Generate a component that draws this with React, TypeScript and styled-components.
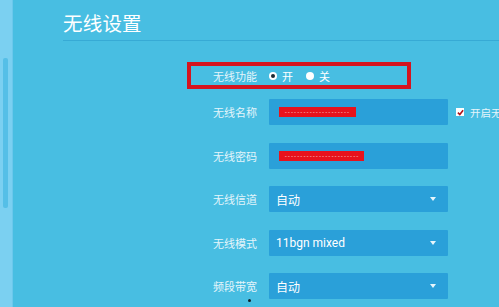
import React from 'react'
import styled, { createGlobalStyle } from 'styled-components'

const GlobalStyle = createGlobalStyle`
  html, body {
    margin: 0;
    padding: 0;
    background: #48bee2;
    overflow: hidden;
  }
  body {
    font-family: "Noto Sans CJK SC", "Noto Sans", sans-serif;
  }
`

const Page = styled.div`
  display: flex;
  width: 499px;
  height: 307px;
  background: #48bee2;
  position: relative;
  overflow: hidden;
`

const Sidebar = styled.div`
  width: 13px;
  flex: none;
  background: #7bd0f1;
  border-right: 1px solid #6cc8ec;
  box-sizing: border-box;
  padding-top: 58px;
  display: flex;
  justify-content: flex-start;
  padding-left: 3px;
`

const ScrollThumb = styled.div`
  width: 5px;
  height: 150px;
  border-radius: 2px;
  background: #55bfe7;
`

const Main = styled.div`
  flex: 1;
  padding-left: 50px;
  display: flex;
  flex-direction: column;
`

const Title = styled.h1`
  margin: 0;
  padding-top: 11px;
  height: 40px;
  box-sizing: border-box;
  font-size: 19.5px;
  font-weight: 400;
  color: #ffffff;
  line-height: 24px;
  letter-spacing: 0.2px;
`

const Divider = styled.div`
  height: 1px;
  background: #37aad5;
`

const Form = styled.div`
  display: flex;
  flex-direction: column;
  gap: 17.5px;
  margin-top: 21px;
  margin-left: 124px;
`

const Row = styled.div<{ highlighted?: boolean }>`
  display: flex;
  align-items: center;
  gap: 12px;
  height: ${({ highlighted }) => (highlighted ? 27 : 26)}px;
  width: ${({ highlighted }) => (highlighted ? '224px' : 'auto')};
  box-shadow: ${({ highlighted }) => (highlighted ? 'inset 0 0 0 4px #d5141e' : 'none')};
  margin-bottom: ${({ highlighted }) => (highlighted ? '-7.5px' : '0')};
`

const Label = styled.div`
  width: 70px;
  text-align: right;
  font-size: 11px;
  color: #e4f5fb;
  white-space: nowrap;
`

const Radios = styled.div`
  display: flex;
  align-items: center;
  gap: 13px;
`

const RadioOption = styled.label`
  display: flex;
  align-items: center;
  gap: 5px;
  font-size: 11px;
  color: #ffffff;
`

const RadioDot = styled.span<{ checked?: boolean }>`
  width: 8px;
  height: 8px;
  border-radius: 50%;
  background: #ffffff;
  display: flex;
  align-items: center;
  justify-content: center;

  &::after {
    content: '';
    width: 4px;
    height: 4px;
    border-radius: 50%;
    background: ${({ checked }) => (checked ? '#1b2a33' : 'transparent')};
  }
`

const Field = styled.div`
  width: 179px;
  height: 26px;
  background: #2aa0d9;
  border-radius: 1px;
  box-sizing: border-box;
  padding: 0 10px;
  display: flex;
  align-items: center;
  justify-content: space-between;
`

const Masked = styled.div<{ w: number }>`
  width: ${({ w }) => w}px;
  height: 10px;
  background: #e8121c;
  display: flex;
  align-items: center;
  padding-left: 5px;
  box-sizing: border-box;
`

const Dashes = styled.span`
  font-family: "DejaVu Sans Mono", monospace;
  font-size: 6px;
  line-height: 6px;
  color: #f9d2d4;
  letter-spacing: -0.5px;
  white-space: nowrap;
`

const SelectText = styled.span`
  font-family: Roboto, "Noto Sans CJK SC", sans-serif;
  font-size: 12px;
  color: #ffffff;
  margin-left: -3px;
`

const Caret = styled.span`
  width: 0;
  height: 0;
  border-left: 3.5px solid transparent;
  border-right: 3.5px solid transparent;
  border-top: 4px solid #e6f6fc;
  margin-right: 2px;
`

const CheckOption = styled.label`
  display: flex;
  align-items: center;
  gap: 6px;
  margin-left: -4px;
  font-size: 10.5px;
  color: #e4f5fb;
  white-space: nowrap;
`

const CheckBox = styled.span`
  width: 8px;
  height: 8px;
  background: #ffffff;
  display: flex;
  align-items: center;
  justify-content: center;
`

const Cursor = styled.div`
  position: absolute;
  left: 248px;
  top: 299px;
  width: 3px;
  height: 3px;
  border-radius: 50%;
  background: #10212a;
`

const selects = [
  { label: '无线信道', value: '自动' },
  { label: '无线模式', value: '11bgn mixed' },
  { label: '频段带宽', value: '自动' },
]

export default function App() {
  return (
    <>
      <GlobalStyle />
      <Page>
        <Sidebar>
          <ScrollThumb />
        </Sidebar>
        <Main>
          <Title>无线设置</Title>
          <Divider />
          <Form>
            <Row highlighted>
              <Label>无线功能</Label>
              <Radios>
                <RadioOption>
                  <RadioDot checked />开
                </RadioOption>
                <RadioOption>
                  <RadioDot />关
                </RadioOption>
              </Radios>
            </Row>

            <Row>
              <Label>无线名称</Label>
              <Field>
                <Masked w={77}>
                  <Dashes>---------------------</Dashes>
                </Masked>
              </Field>
              <CheckOption>
                <CheckBox>
                  <svg width="7" height="7" viewBox="0 0 8 8">
                    <path d="M1 4.2 L3.2 6.4 L7 1.4" stroke="#b0121a" strokeWidth="1.8" fill="none" />
                  </svg>
                </CheckBox>
                开启无线广播
              </CheckOption>
            </Row>

            <Row>
              <Label>无线密码</Label>
              <Field>
                <Masked w={85}>
                  <Dashes>------------------------</Dashes>
                </Masked>
              </Field>
            </Row>

            {selects.map((s) => (
              <Row key={s.label}>
                <Label>{s.label}</Label>
                <Field>
                  <SelectText>{s.value}</SelectText>
                  <Caret />
                </Field>
              </Row>
            ))}
          </Form>
        </Main>
        <Cursor />
      </Page>
    </>
  )
}
